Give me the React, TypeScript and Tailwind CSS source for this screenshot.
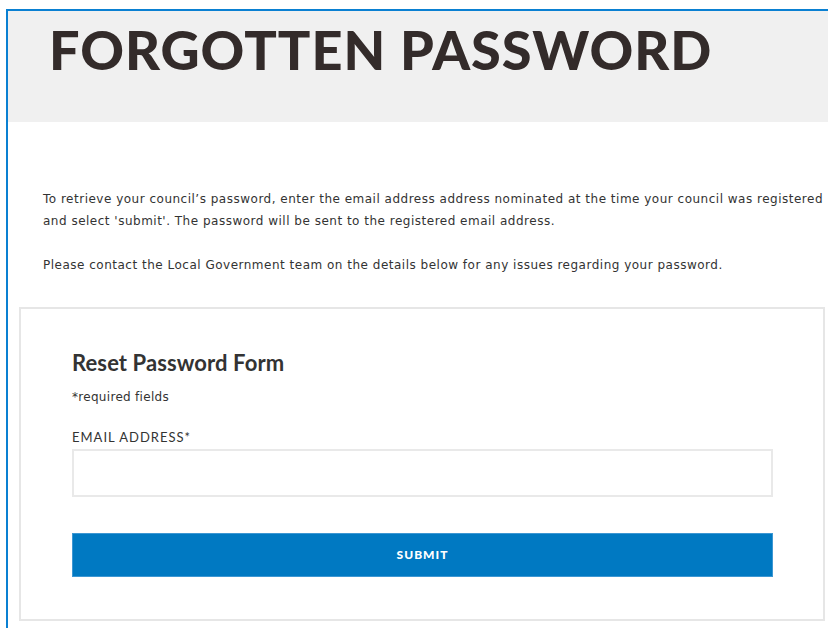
const ResetForm = (): React.ReactElement => {
  return (
    <div className="mt-[31px] mr-[3px] ml-[11px] border-2 border-[#e6e6e6] bg-white px-[51px] pt-[41px] pb-[42px]">
      <h2 className="font-['Lato',sans-serif] text-[22px] leading-[26px] font-bold tracking-[0.1px] text-[#333]">
        Reset Password Form
      </h2>
      <p className="mt-[14px] font-['DejaVu_Sans',Verdana,sans-serif] text-[12px] leading-[14px] tracking-[0.3px] text-[#333]">
        *required fields
      </p>
      <label
        htmlFor="email"
        className="mt-[25px] block font-['Lato',sans-serif] text-[13px] leading-[16px] tracking-[1px] text-[#333]"
      >
        EMAIL ADDRESS*
      </label>
      <input
        id="email"
        type="email"
        className="mt-[4px] block h-[48px] w-[701px] border-2 border-[#e9e9e9] bg-white px-3 outline-none"
      />
      <button
        type="submit"
        className="mt-[36px] flex h-[44px] w-[701px] items-center justify-center border border-[#3d97d3] bg-[#0079c2] font-['Lato',sans-serif] text-[12px] font-black tracking-[1px] text-white"
      >
        SUBMIT
      </button>
    </div>
  );
};

export default function App() {
  return (
    <div className="h-[628px] w-[828px] overflow-hidden bg-white pt-[9px] pl-[6px]">
      <div className="h-full border-t-2 border-l-2 border-[#0a80d2]">
        <div className="h-[111px] bg-[#f0f0f0] pl-[41px] pt-[7px]">
          <h1 className="font-['Lato',sans-serif] text-[54px] leading-[64px] font-black tracking-[1px] text-[#332b2a]">
            FORGOTTEN PASSWORD
          </h1>
        </div>
        <div className="pl-[35px] pt-[66px] font-['DejaVu_Sans',Verdana,sans-serif] text-[12px] leading-[22px] tracking-[0.5px] whitespace-nowrap text-[#333]">
          <p>
            To retrieve your council’s password, enter the email address address nominated at the time your council was registered
            <br />
            and select 'submit'. The password will be sent to the registered email address.
          </p>
          <p className="mt-[22px]">
            Please contact the Local Government team on the details below for any issues regarding your password.
          </p>
        </div>
        <ResetForm />
      </div>
    </div>
  );
}
